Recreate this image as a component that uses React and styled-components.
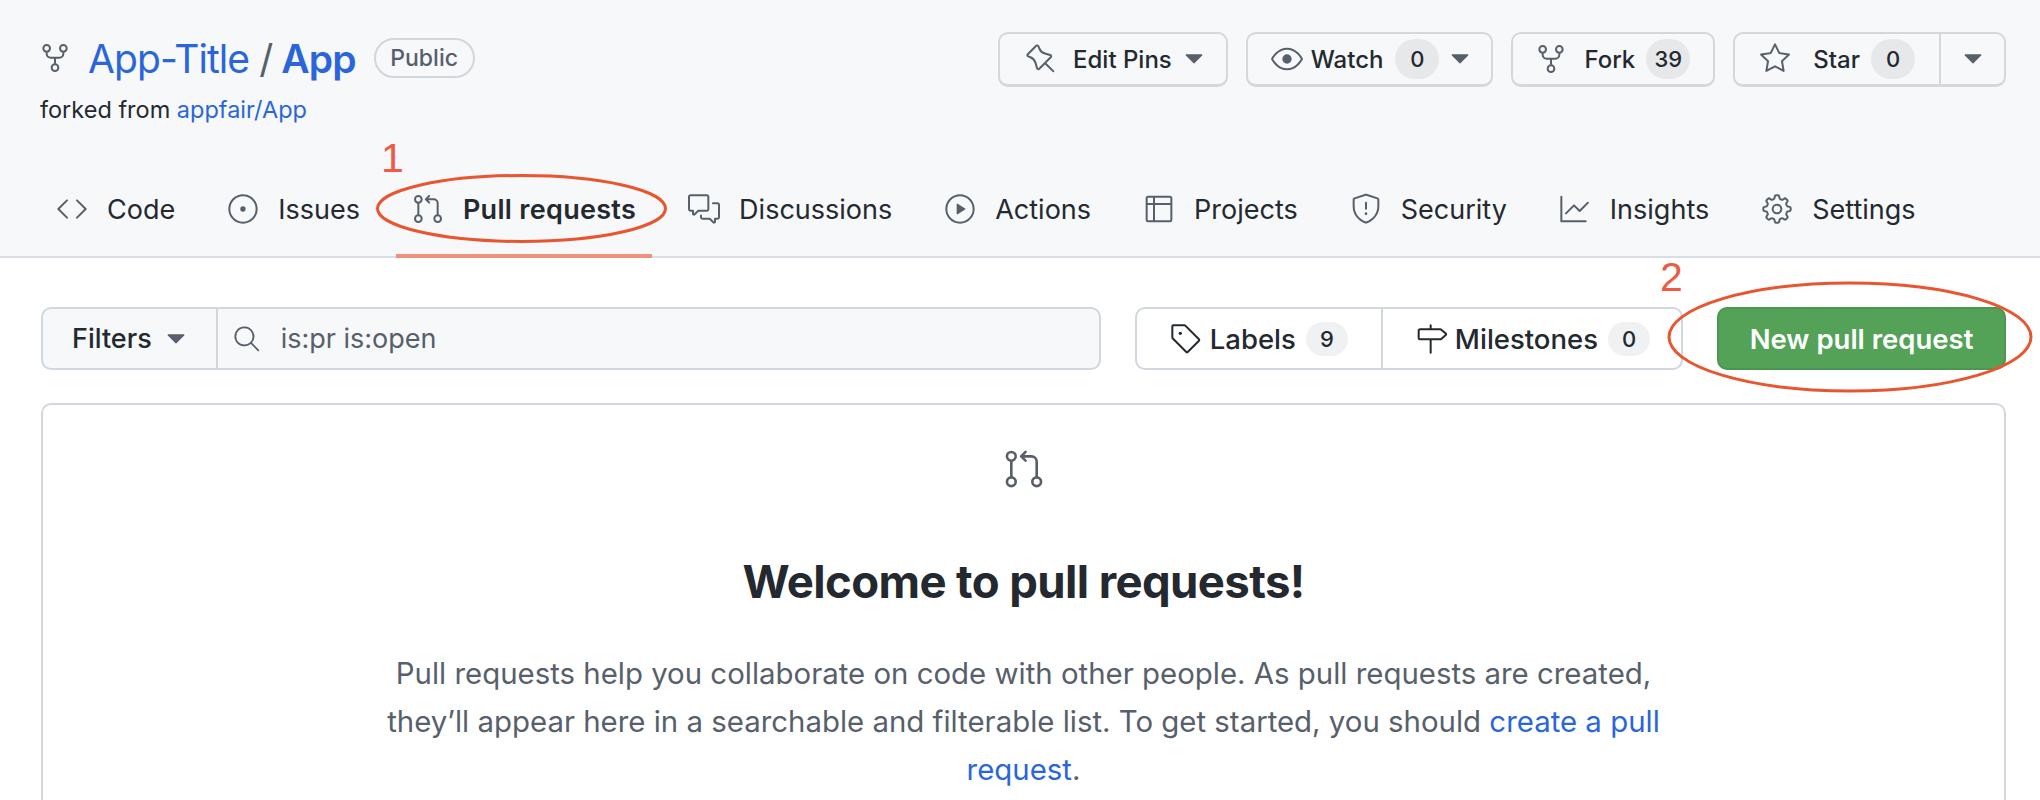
import React from 'react';
import styled, { createGlobalStyle } from 'styled-components';
import {
  GoRepoForked, GoPin, GoEye, GoStar, GoTriangleDown, GoCode, GoIssueOpened,
  GoGitPullRequest, GoCommentDiscussion, GoPlay, GoTable, GoShield, GoGraph,
  GoGear, GoSearch, GoTag, GoMilestone,
} from 'react-icons/go';

const Global = createGlobalStyle`
  html, body { margin: 0; padding: 0; background: #fff; }
  body { font-family: Inter, "Liberation Sans", sans-serif; color: #24292f; }
  a { color: #2a66d9; text-decoration: none; }
  svg[viewBox="0 0 16 16"] { stroke: currentColor; stroke-width: 0.2; flex: none; }
`;

const Page = styled.div`
  position: relative;
  width: 2040px;
  height: 800px;
  overflow: hidden;
`;

const Header = styled.header`
  height: 258px;
  box-sizing: border-box;
  background: #f6f8fa;
  border-bottom: 2px solid #d8dee4;
  padding: 32px 34px 0 40px;
  display: flex;
  flex-direction: column;
`;

const TopRow = styled.div`
  display: flex;
  justify-content: space-between;
  align-items: flex-start;
  height: 128px;
  flex: none;
`;

const RepoInfo = styled.div`
  display: flex;
  flex-direction: column;
`;

const TitleRow = styled.div`
  display: flex;
  align-items: center;
  height: 52px;
  color: #57606a;
  svg { margin: 0 17px 0 -1px; color: #57606a; }
`;

const Owner = styled.a`
  font-size: 39px;
  letter-spacing: -0.9px;
`;

const Slash = styled.span`
  font-size: 39px;
  margin: 0 8px 0 10px;
`;

const RepoName = styled.a`
  font-size: 39px;
  font-weight: 600;
  letter-spacing: -0.9px;
`;

const Visibility = styled.span`
  display: inline-flex;
  align-items: center;
  justify-content: center;
  width: 101px;
  height: 40px;
  box-sizing: border-box;
  margin-left: 18px;
  border: 2px solid #d0d7de;
  border-radius: 20px;
  font-size: 23px;
  font-weight: 500;
  color: #57606a;
`;

const ForkedFrom = styled.div`
  margin-top: 11px;
  font-size: 23.5px;
  line-height: 30px;
`;

const Actions = styled.div`
  display: flex;
  gap: 18px;
`;

const ActionButton = styled.div`
  display: flex;
  align-items: stretch;
  height: 55px;
  box-sizing: border-box;
  background: #f6f8fa;
  border: 2px solid #d5d8db;
  border-bottom-width: 3px;
  border-radius: 10px;
  font-size: 24px;
  font-weight: 500;
`;

const ActionPart = styled.div`
  display: flex;
  align-items: center;
  padding: ${(p) => p.$pad};
  & + & { border-left: 2px solid #d5d8db; }
  svg { color: #57606a; }
`;

const ActionLabel = styled.span`
  margin-left: ${(p) => p.$ml}px;
`;

const Caret = styled(GoTriangleDown)`
  margin-left: ${(p) => p.$ml ?? 0}px;
`;

const Count = styled.span`
  display: inline-flex;
  align-items: center;
  justify-content: center;
  min-width: 44px;
  height: 40px;
  padding: 0 8px;
  box-sizing: border-box;
  border-radius: 20px;
  background: #e7e8ea;
  font-size: 22px;
  font-weight: 500;
  margin-left: ${(p) => p.$ml}px;
`;

const Nav = styled.nav`
  display: flex;
  flex: 1;
  gap: 20px;
`;

const Tab = styled.a`
  display: flex;
  align-items: center;
  gap: 19px;
  padding: 4px 16px 0;
  color: #24292f;
  font-size: 27px;
  font-weight: ${(p) => (p.$active ? 600 : 400)};
  letter-spacing: ${(p) => (p.$active ? '0.3px' : '0')};
  margin-bottom: -2px;
  border-bottom: 4px solid ${(p) => (p.$active ? '#ee9377' : 'transparent')};
  svg { color: #57606a; }
`;

const Main = styled.main`
  padding: 49px 34px 0 41px;
`;

const Toolbar = styled.div`
  display: flex;
  gap: 34px;
  height: 63px;
`;

const FilterGroup = styled.div`
  flex: 1;
  display: flex;
  box-sizing: border-box;
  background: #f6f8fa;
  border: 2px solid #d0d7de;
  border-radius: 10px;
  overflow: hidden;
`;

const FilterButton = styled.div`
  display: flex;
  align-items: center;
  gap: 8px;
  padding: 0 24px 0 29px;
  border-right: 2px solid #d0d7de;
  font-size: 27px;
  font-weight: 500;
  svg { color: #57606a; }
`;

const SearchField = styled.div`
  display: flex;
  align-items: center;
  gap: 20px;
  padding-left: 14px;
  font-size: 27px;
  color: #57606a;
  svg { color: #57606a; }
`;

const LinkGroup = styled.div`
  display: flex;
  box-sizing: border-box;
  background: #fff;
  border: 2px solid #d0d7de;
  border-radius: 10px;
`;

const GroupLink = styled.a`
  display: flex;
  align-items: center;
  gap: 8px;
  padding: 0 ${(p) => p.$pr}px 0 ${(p) => p.$pl}px;
  color: #24292f;
  font-size: 27.5px;
  font-weight: 500;
  & + & { border-left: 2px solid #d0d7de; }
  svg { color: #24292f; }
`;

const SmallCount = styled.span`
  display: inline-flex;
  align-items: center;
  justify-content: center;
  width: 42px;
  height: 34px;
  margin-left: 2px;
  border-radius: 17px;
  background: #eff1f3;
  font-size: 22px;
  font-weight: 500;
`;

const PrimaryButton = styled.div`
  display: flex;
  align-items: center;
  justify-content: center;
  width: 289px;
  box-sizing: border-box;
  background: #53a257;
  border: 2px solid #4b9650;
  border-radius: 10px;
  color: #fff;
  font-size: 27.5px;
  font-weight: 600;
`;

const Card = styled.section`
  margin-top: 33px;
  height: 500px;
  box-sizing: border-box;
  border: 2px solid #d0d7de;
  border-radius: 10px;
  padding-top: 43px;
  display: flex;
  flex-direction: column;
  align-items: center;
  text-align: center;
`;

const BlankIcon = styled.div`
  display: flex;
  color: #57606a;
`;

const Heading = styled.h2`
  margin: 62px 0 0;
  font-size: 45.5px;
  line-height: 60px;
  font-weight: 700;
  letter-spacing: -0.6px;
  color: #24292f;
`;

const Description = styled.p`
  width: 1340px;
  margin: 38px 0 0;
  font-size: 29.4px;
  line-height: 48px;
  color: #57606a;
`;

const Marks = styled.svg`
  position: absolute;
  inset: 0;
  pointer-events: none;
`;

const StepNumber = styled.span`
  position: absolute;
  left: ${(p) => p.$x}px;
  top: ${(p) => p.$y}px;
  font-family: "Liberation Sans", sans-serif;
  font-size: 41px;
  line-height: 41px;
  color: #ee5a45;
`;

const tabs = [
  ['Code', GoCode],
  ['Issues', GoIssueOpened],
  ['Pull requests', GoGitPullRequest, true],
  ['Discussions', GoCommentDiscussion],
  ['Actions', GoPlay],
  ['Projects', GoTable],
  ['Security', GoShield],
  ['Insights', GoGraph],
  ['Settings', GoGear],
];

export default function App() {
  return (
    <Page>
      <Global />
      <Header>
        <TopRow>
          <RepoInfo>
            <TitleRow>
              <GoRepoForked size={32} />
              <Owner href="#">App-Title</Owner>
              <Slash>/</Slash>
              <RepoName href="#">App</RepoName>
              <Visibility>Public</Visibility>
            </TitleRow>
            <ForkedFrom>forked from <a href="#">appfair/App</a></ForkedFrom>
          </RepoInfo>
          <Actions>
            <ActionButton>
              <ActionPart $pad="0 16px 0 25px">
                <GoPin size={32} />
                <ActionLabel $ml={16}>Edit Pins</ActionLabel>
                <Caret size={32} $ml={6} />
              </ActionPart>
            </ActionButton>
            <ActionButton>
              <ActionPart $pad="0 15px 0 23px">
                <GoEye size={32} />
                <ActionLabel $ml={8}>Watch</ActionLabel>
                <Count $ml={12}>0</Count>
                <Caret size={32} $ml={5} />
              </ActionPart>
            </ActionButton>
            <ActionButton>
              <ActionPart $pad="0 23px 0 22px">
                <GoRepoForked size={32} />
                <ActionLabel $ml={17}>Fork</ActionLabel>
                <Count $ml={11}>39</Count>
              </ActionPart>
            </ActionButton>
            <ActionButton>
              <ActionPart $pad="0 24px 0 24px">
                <GoStar size={32} />
                <ActionLabel $ml={22}>Star</ActionLabel>
                <Count $ml={11}>0</Count>
              </ActionPart>
              <ActionPart $pad="0 15px 0 16px">
                <Caret size={32} />
              </ActionPart>
            </ActionButton>
          </Actions>
        </TopRow>
        <Nav>
          {tabs.map(([label, Icon, active]) => (
            <Tab key={label} href="#" $active={active}>
              <Icon size={32} />
              {label}
            </Tab>
          ))}
        </Nav>
      </Header>
      <Main>
        <Toolbar>
          <FilterGroup>
            <FilterButton>Filters <GoTriangleDown size={32} /></FilterButton>
            <SearchField><GoSearch size={29} />is:pr is:open</SearchField>
          </FilterGroup>
          <LinkGroup>
            <GroupLink href="#" $pl={33} $pr={33}>
              <GoTag size={32} />Labels<SmallCount>9</SmallCount>
            </GroupLink>
            <GroupLink href="#" $pl={32} $pr={31}>
              <GoMilestone size={32} />Milestones<SmallCount>0</SmallCount>
            </GroupLink>
          </LinkGroup>
          <PrimaryButton>New pull request</PrimaryButton>
        </Toolbar>
        <Card>
          <BlankIcon><GoGitPullRequest size={42} /></BlankIcon>
          <Heading>Welcome to pull requests!</Heading>
          <Description>
            Pull requests help you collaborate on code with other people. As pull requests are created, they’ll appear here in a searchable and filterable list. To get started, you should <a href="#">create a pull request</a>.
          </Description>
        </Card>
      </Main>
      <Marks width="2040" height="800" viewBox="0 0 2040 800" fill="none">
        <ellipse cx="521.5" cy="208.5" rx="144" ry="33" stroke="#e8552f" strokeWidth="3" />
        <ellipse cx="1850" cy="337" rx="181" ry="54" stroke="#e8552f" strokeWidth="3" />
      </Marks>
      <StepNumber $x={381} $y={138}>1</StepNumber>
      <StepNumber $x={1660} $y={257}>2</StepNumber>
    </Page>
  );
}
